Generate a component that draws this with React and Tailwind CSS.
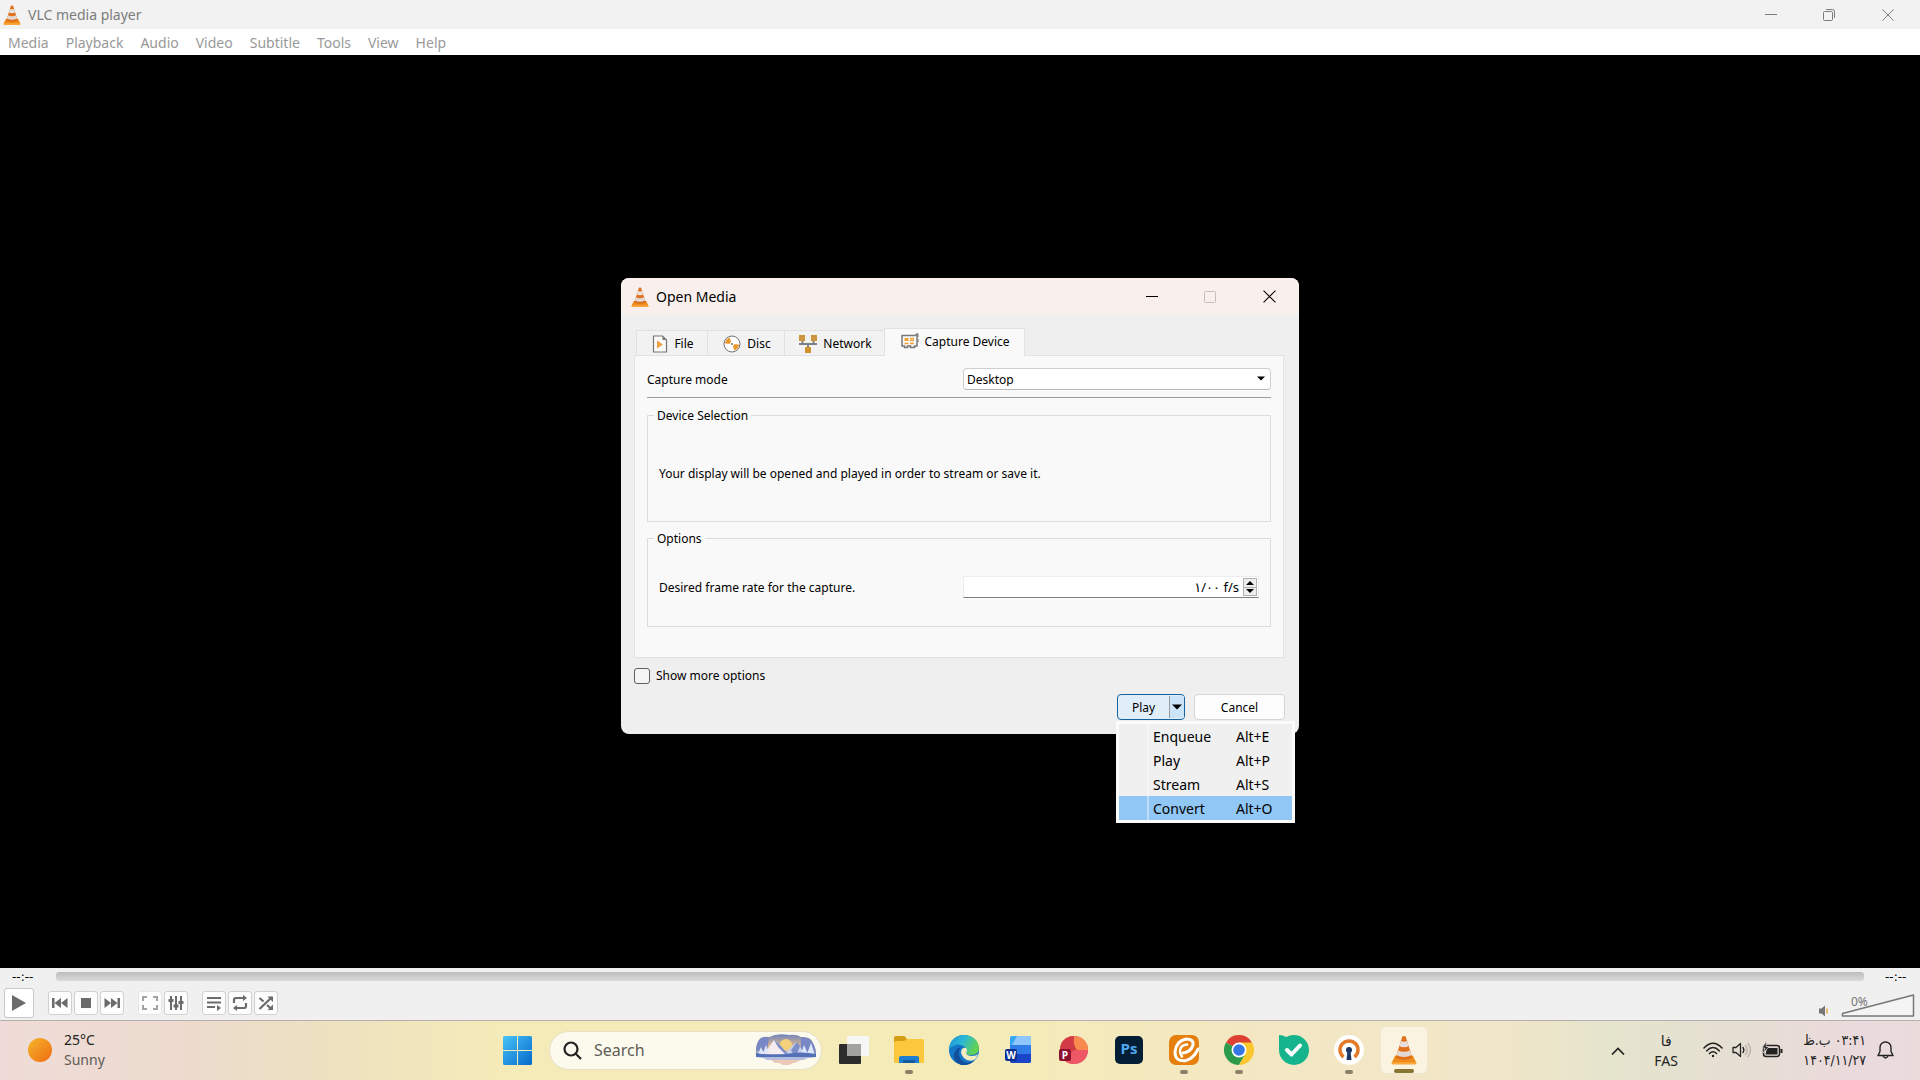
import React, { useState } from "react";

const menus = ["Media", "Playback", "Audio", "Video", "Subtitle", "Tools", "View", "Help"];

const actions = [
  { name: "Enqueue", keys: "Alt+E" },
  { name: "Play", keys: "Alt+P" },
  { name: "Stream", keys: "Alt+S" },
  { name: "Convert", keys: "Alt+O" },
];

function Cone({ className }) {
  return (
    <svg viewBox="0 0 32 36" className={className} aria-hidden="true">
      <path d="M5 25h22l4 8.500q.5 2-1.500 2H2.500q-2 0-1.500-2z" fill="#f08a1c" />
      <path d="M1 33h30l.3 1.500q0 1-1.500 1H2.200q-1.500 0-1.500-1z" fill="#f9a93a" />
      <path d="M6 27q10 5.500 20 0l-1-3H7z" fill="#b3541a" />
      <path d="M14 1.500q2-1.200 4 0L26 27q-10 5-20 0z" fill="#e0701b" />
      <path d="M12.300 7q3.700 1.600 7.400 0l2 6.500q-5.700 2.500-11.400 0z" fill="#e6dfdb" />
      <path d="M8.700 18.500q7.300 3.400 14.600 0l2 6q-9.300 4.200-18.600 0z" fill="#e3d8d2" />
    </svg>
  );
}

function Minimize() {
  return (
    <svg width="12" height="12" viewBox="0 0 12 12" stroke="currentColor" fill="none">
      <path d="M0 5.500h12" />
    </svg>
  );
}

function Close({ size }) {
  return (
    <svg width={size} height={size} viewBox="0 0 12 12" stroke="currentColor" fill="none">
      <path d="M.5.5l11 11M11.500.5l-11 11" />
    </svg>
  );
}

function TitleBar() {
  return (
    <header className="flex h-[29px] items-center justify-between bg-[#f2f2f2] text-[#7c7c7c]">
      <div className="flex items-center gap-[7px] pl-[3px]">
        <Cone className="h-5 w-[18px]" />
        <h1 className="font-['Noto_Sans',sans-serif] text-[14px]">VLC media player</h1>
      </div>
      <div className="flex pr-[2px]">
        <button aria-label="Minimize" className="flex h-7 w-[58px] items-center justify-center"><Minimize /></button>
        <button aria-label="Restore" className="flex h-7 w-[58px] items-center justify-center">
          <svg width="12" height="12" viewBox="0 0 12 12" stroke="currentColor" fill="none">
            <rect x=".5" y="2.500" width="9" height="9" rx="1" />
            <path d="M3 .5h6.500q2 0 2 2V9" />
          </svg>
        </button>
        <button aria-label="Close" className="flex h-7 w-[60px] items-center justify-center"><Close size={12} /></button>
      </div>
    </header>
  );
}

function MenuBar() {
  return (
    <nav className="flex h-[26px] items-center gap-px bg-white font-['Noto_Sans',sans-serif] text-[14px] text-[#999999]">
      {menus.map((m) => (
        <button key={m} className="px-2">{m}</button>
      ))}
    </nav>
  );
}

function FileIcon() {
  return (
    <svg width="16" height="18" viewBox="0 0 16 18">
      <path d="M1.500 1h9l4 4v12h-13z" fill="#fafafa" stroke="#777" strokeWidth="1.200" />
      <path d="M10.500 1v4h4z" fill="#777" />
      <path d="M5 5.500v8l6-4z" fill="#f0a040" />
    </svg>
  );
}

function DiscIcon() {
  return (
    <svg width="18" height="18" viewBox="0 0 18 18">
      <circle cx="9" cy="9" r="8" fill="#fff" stroke="#777" />
      <path d="M9 9L2 8.500Q2.500 4 6.500 2.500z" fill="#e8982f" />
      <path d="M9 9l7 .5Q15.500 14 11.500 15.500z" fill="#e8982f" />
      <circle cx="9" cy="9" r="2.200" fill="#fff" />
      <circle cx="9" cy="9" r="1" fill="#777" />
    </svg>
  );
}

function NetworkIcon() {
  return (
    <svg width="18" height="18" viewBox="0 0 18 18">
      <path d="M3.500 6v3h11V6M9 9v4" fill="none" stroke="#808080" strokeWidth="2" />
      <path d="M0 9h18" stroke="#808080" strokeWidth="2" />
      <rect x="0" y="0" width="6" height="6" fill="#cf9440" />
      <rect x="12" y="0" width="6" height="6" fill="#cf9440" />
      <rect x="6" y="12" width="6" height="6" fill="#cf9430" />
    </svg>
  );
}

function CaptureIcon() {
  return (
    <svg width="18" height="18" viewBox="0 0 18 18">
      <path d="M1 2.500h13l2-1.500v12h-2.500v1.500h-4V13h-3v1.500h-3V13H1z" fill="#fafafa" stroke="#777" strokeWidth="1.500" />
      <path d="M17 1v3M17 6v3" stroke="#777" strokeWidth="1" />
      <rect x="3.500" y="5" width="4" height="3" fill="#f0a030" />
      <path d="M9 5.500h4M9 7.500h4M3.500 10.500h4M9 10.500h4" stroke="#f0a030" strokeWidth="1.300" />
    </svg>
  );
}

const tabs = [
  { name: "File", icon: FileIcon, width: "w-[71px]" },
  { name: "Disc", icon: DiscIcon, width: "w-[77px]" },
  { name: "Network", icon: NetworkIcon, width: "w-[100px]" },
  { name: "Capture Device", icon: CaptureIcon, width: "w-[141px]" },
];

function Tabs() {
  const [active, setActive] = useState("Capture Device");
  return (
    <div role="tablist" className="relative z-10 -mb-px ml-[2px] flex items-end">
      {tabs.map(({ name, icon: Icon, width }) => (
        <button
          key={name}
          role="tab"
          aria-selected={active === name}
          onClick={() => setActive(name)}
          className={
            active === name
              ? `${width} flex h-7 items-center justify-center gap-[5px] border border-b-0 border-[#e2e2e2] bg-[#f9f9f9] pb-px pl-[2px]`
              : `${width} flex h-[26px] items-center justify-center gap-[6px] border border-r-0 border-[#e0e0e0] bg-[#f2f2f2] pt-px pl-[2px]`
          }
        >
          <Icon />
          {name}
        </button>
      ))}
    </div>
  );
}

function CapturePanel() {
  return (
    <div role="tabpanel" className="border border-[#e2e2e2] bg-[#f9f9f9] px-3 pt-3 pb-[30px]">
      <div className="flex h-[22px] items-center">
        <label htmlFor="mode" className="flex-1 pt-px">Capture mode</label>
        <div className="relative w-[308px]">
          <select id="mode" className="h-[22px] w-full appearance-none rounded border border-[#cfcfcf] border-b-[#b8b8b8] bg-white pt-px pl-[3px] leading-none">
            <option>Desktop</option>
          </select>
          <svg width="8" height="5" viewBox="0 0 8 5" className="pointer-events-none absolute top-2 right-[6px]">
            <path d="M0 .5h8L4 4.500z" fill="#000" />
          </svg>
        </div>
      </div>
      <hr className="mt-[7px] border-[#9b9b9b]" />

      <section className="mt-[17px] h-[107px] border border-[#dcdcdc] px-[11px]">
        <h3 className="-mt-2 -ml-[5px] w-fit bg-[#f9f9f9] px-[3px] leading-4">Device Selection</h3>
        <p className="mt-[42px] leading-4">Your display will be opened and played in order to stream or save it.</p>
      </section>

      <section className="mt-4 h-[89px] border border-[#dcdcdc] px-[11px]">
        <h3 className="-mt-2 -ml-[5px] w-fit bg-[#f9f9f9] px-[3px] leading-4">Options</h3>
        <div className="mt-[29px] flex h-[22px] items-center">
          <label htmlFor="fps" className="flex-1 pt-px">Desired frame rate for the capture.</label>
          <div className="flex h-[22px] w-[296px] items-center border border-[#ececec] border-b-[#808080] bg-white pr-px">
            <input
              id="fps"
              defaultValue="۱/۰۰ f/s"
              className="min-w-0 flex-1 bg-transparent pt-px pr-1 text-right font-['Noto_Sans','DejaVu_Sans',sans-serif] text-[13px] outline-none"
            />
            <div className="flex h-[18px] w-[14px] flex-col border border-[#b0b0b0] bg-[#eeeeee]">
              <button aria-label="Increase" className="flex flex-1 items-center justify-center border-b border-[#b0b0b0]">
                <svg width="8" height="4" viewBox="0 0 8 4"><path d="M0 4h8L4 0z" /></svg>
              </button>
              <button aria-label="Decrease" className="flex flex-1 items-center justify-center">
                <svg width="8" height="4" viewBox="0 0 8 4"><path d="M0 0h8L4 4z" /></svg>
              </button>
            </div>
          </div>
        </div>
      </section>
    </div>
  );
}

function ActionMenu() {
  return (
    <div role="menu" className="absolute top-[26px] left-0 -ml-[2px] w-[179px] border-[3px] border-[#fbfbfb] bg-[#f0f0f0] font-['Noto_Sans',sans-serif] text-[14px]">
      {actions.map((a) => (
        <button
          key={a.name}
          role="menuitem"
          className={`grid h-6 w-full grid-cols-[30px_87px_1fr] items-center text-left ${a.name === "Convert" ? "bg-[#91c7f5]" : ""}`}
        >
          <span className="h-6 border-r-2 border-white/40" />
          <span className="pl-1">{a.name}</span>
          <span>{a.keys}</span>
        </button>
      ))}
    </div>
  );
}

function OpenMedia() {
  const [more, setMore] = useState(false);
  return (
    <section aria-label="Open Media" className="h-fit w-[678px] rounded-lg bg-[#efefef] font-['Noto_Sans','DejaVu_Sans',sans-serif] text-[12px] text-black">
      <div className="flex h-[37px] items-center justify-between rounded-t-lg bg-[#f9f0ee] pl-[10px]">
        <div className="flex items-center gap-[7px]">
          <Cone className="h-5 w-[18px]" />
          <h2 className="text-[14px]">Open Media</h2>
        </div>
        <div className="flex">
          <button aria-label="Minimize" className="flex h-9 w-[58px] items-center justify-center"><Minimize /></button>
          <button aria-label="Maximize" disabled className="flex h-9 w-[58px] items-center justify-center text-[#c4bdba]">
            <svg width="12" height="12" viewBox="0 0 12 12" stroke="currentColor" fill="none">
              <rect x=".5" y=".5" width="11" height="11" rx="1" />
            </svg>
          </button>
          <button aria-label="Close" className="flex h-9 w-[60px] items-center justify-center"><Close size={13} /></button>
        </div>
      </div>

      <div className="pt-[13px] pr-[15px] pb-[14px] pl-[13px]">
        <Tabs />
        <CapturePanel />
        <label className="mt-[10px] flex h-4 w-fit items-center gap-[6px]">
          <input
            type="checkbox"
            checked={more}
            onChange={() => setMore(!more)}
            className="h-4 w-4 appearance-none rounded-[3px] border border-[#5f5f5f] bg-[#f5f5f5] checked:bg-[#0067c0]"
          />
          Show more options
        </label>
        <div className="mt-[10px] -mr-px flex justify-end gap-[9px]">
          <div className="relative flex h-[26px] w-[68px] rounded border border-[#15629f] bg-[#e0eef9]">
            <button className="flex-1 pt-px">Play</button>
            <button aria-label="More actions" aria-haspopup="menu" className="my-px flex w-[15px] items-center justify-center border-l border-[#9a9a9a] bg-[#cce4f7]">
              <svg width="10" height="6" viewBox="0 0 10 6"><path d="M0 .5h10L5 5.500z" /></svg>
            </button>
            <ActionMenu />
          </div>
          <button className="h-[26px] w-[91px] rounded border border-[#d5d5d5] bg-[#fdfdfd] pt-px">Cancel</button>
        </div>
      </div>
    </section>
  );
}

function ControlButton({ label, className = "", children }) {
  return (
    <button aria-label={label} className={`flex h-6 w-6 items-center justify-center rounded-[3px] border border-[#d0d0d0] bg-[#fdfdfd] ${className}`}>
      <svg width="16" height="16" viewBox="0 0 16 16" fill="#6b6b6b">{children}</svg>
    </button>
  );
}

function Controls() {
  return (
    <footer className="border-b border-[#b5b0ae] bg-[#f0f0f0] font-['DejaVu_Sans',sans-serif] text-[12px]">
      <div className="flex h-[18px] items-center">
        <span className="w-14 pl-3">--:--</span>
        <input
          type="range"
          aria-label="Seek"
          disabled
          className="mb-px h-[9px] flex-1 appearance-none rounded-[3px] bg-linear-to-b from-[#bebebe] to-[#dadada] [&::-webkit-slider-thumb]:w-0 [&::-webkit-slider-thumb]:appearance-none"
        />
        <span className="w-14 pl-[21px]">--:--</span>
      </div>
      <div className="flex h-[34px] items-center pr-[5px] pl-1">
        <button aria-label="Play" className="flex h-[30px] w-[30px] items-center justify-center rounded-[3px] border border-[#c8c8c8] bg-white">
          <svg width="16" height="18" viewBox="0 0 16 18"><path d="M1 1v16l14-8z" fill="#6b6b6b" /></svg>
        </button>
        <div className="ml-[14px] flex gap-[2px]">
          <ControlButton label="Previous">
            <path d="M0 3h2.500v10H0zM9 3v10L2.500 8zM15.500 3v10L9 8z" />
          </ControlButton>
          <ControlButton label="Stop"><path d="M3 3h10v10H3z" /></ControlButton>
          <ControlButton label="Next">
            <path d="M13.500 3H16v10h-2.500zM.5 3v10L7 8zM7 3v10l6.500-5z" />
          </ControlButton>
        </div>
        <div className="ml-[14px] flex gap-[2px]">
          <ControlButton label="Fullscreen" className="border-[#e6e6e6]">
            <path d="M1 6V2h4M11 2h4v4M15 10v4h-4M5 14H1v-4" fill="none" stroke="#a3a3a3" strokeWidth="2" />
          </ControlButton>
          <ControlButton label="Extended settings">
            <path d="M3 1v14M8 1v14M13 1v14" stroke="#6b6b6b" strokeWidth="2" />
            <path d="M.5 4h5v3h-5zM5.500 9.500h5v3h-5zM10.500 6h5v3h-5z" />
          </ControlButton>
        </div>
        <div className="ml-[14px] flex gap-[2px]">
          <ControlButton label="Playlist">
            <path d="M1 3h14M1 7.500h14M1 12h8" stroke="#6b6b6b" strokeWidth="2.200" />
            <path d="M11 10v6l4-3z" />
          </ControlButton>
          <ControlButton label="Loop">
            <path d="M2 8V5q0-2 2-2h8M14 8v3q0 2-2 2H4" fill="none" stroke="#6b6b6b" strokeWidth="2.200" />
            <path d="M11 0v6l4-3zM5 10v6l-4-3z" />
          </ControlButton>
          <ControlButton label="Random">
            <path d="M1.500 14L13 3M1.500 3l4 3.500M9 10l4 3.500" fill="none" stroke="#6b6b6b" strokeWidth="2.200" />
            <path d="M9.500 1.500H15V7zM15 9.500V15H9.500z" />
          </ControlButton>
        </div>
        <div className="mt-1 ml-auto flex items-end gap-3">
          <button aria-label="Mute">
            <svg width="10" height="12" viewBox="0 0 10 12">
              <path d="M0 3.500h2.500L6 .5v11L2.500 8.500H0z" fill="#757575" />
              <path d="M8 3.500v5" stroke="#e9a94d" strokeWidth="1.500" />
            </svg>
          </button>
          <div className="relative h-[23px] w-[74px]">
            <svg width="74" height="23" viewBox="0 0 74 23" className="absolute inset-0">
              <path d="M1.500 19.500L72.500 1v21h-71z" fill="#f4f4f4" stroke="#777" strokeWidth="1.500" strokeLinejoin="round" />
            </svg>
            <span className="absolute top-0 left-[10px] font-['Noto_Sans',sans-serif] text-[12px] leading-4 text-[#777777]">0%</span>
            <input type="range" aria-label="Volume" defaultValue="0" className="absolute inset-0 m-0 h-full w-full opacity-0" />
          </div>
        </div>
      </div>
    </footer>
  );
}

function SearchArt() {
  return (
    <svg width="62" height="32" viewBox="0 0 62 32" aria-hidden="true">
      <defs>
        <linearGradient id="sky" x1="0" y1="0" x2="0" y2="1">
          <stop offset="0" stopColor="#7183bd" />
          <stop offset=".55" stopColor="#d9b88f" />
          <stop offset="1" stopColor="#8fa5d6" />
        </linearGradient>
      </defs>
      <path d="M4 6Q6 2 14 3q8-4 20-2 8-1 12 2 10-1 12 6 3 6 3 12H1q-1-8 3-15z" fill="url(#sky)" />
      <path d="M4 6q3-4 10-2l-2 13H1q0-7 3-11zM46 4q9-1 12 5 3 5 3 12H45z" fill="#7788c4" />
      <circle cx="31" cy="11" r="6" fill="#f6d17c" />
      <path d="M9 20L19 6q4 3 6 7l7 7z" fill="#f4ecef" />
      <path d="M30 20q6-8 12-12l8 12z" fill="#c9cfe8" />
      <path d="M19 6l4 7 7 7h3L25 11zM42 8l-6 8 2 4h4l3-8z" fill="#7c8fc9" />
      <path d="M3 20l3-7 3 7zM8 19l3-8 3 8zM46 20l3-9 4 9zM52 20l4-11 4 12z" fill="#dfe6f8" />
      <path d="M1 19q15 3 30 1 15-3 30 0v3q-30 3-60 0z" fill="#5271b6" />
      <path d="M6 23h50l-8 3H12z" fill="#b4bddd" />
      <path d="M16 26h30l-6 3H20zM24 29h14l-4 2h-6z" fill="#ecc9b4" />
    </svg>
  );
}

function TaskView() {
  return (
    <svg width="30" height="28" viewBox="0 0 30 28">
      <rect x="8" y="0" width="22" height="20" rx="1" fill="#f6f6f4" />
      <rect x="0" y="8" width="22" height="20" rx="1" fill="#2c2c2c" />
      <path d="M8 8h14v12H8z" fill="#a3a3a1" />
    </svg>
  );
}

function Explorer() {
  return (
    <svg width="30" height="28" viewBox="0 0 30 28">
      <path d="M0 2q0-2 2-2h8q1 0 3 3v5H0z" fill="#d59c16" />
      <path d="M0 7q0-2 2-2h8l3-2h15q2 0 2 2v21q0 1-1 1H1q-1 0-1-1z" fill="#fbc73d" />
      <path d="M5 27v-5q0-2 2-2h16q2 0 2 2v5z" fill="#1e7fd0" />
      <path d="M9 27v-2q0-1 1-1h10q1 0 1 1v2z" fill="#13599c" />
    </svg>
  );
}

function Edge() {
  return (
    <svg width="30" height="30" viewBox="0 0 30 30">
      <defs>
        <linearGradient id="edgeTop" x1="0" y1="0" x2="1" y2=".4">
          <stop offset="0" stopColor="#1b8fd6" />
          <stop offset=".5" stopColor="#2bb9d6" />
          <stop offset="1" stopColor="#63d151" />
        </linearGradient>
      </defs>
      <circle cx="15" cy="15" r="15" fill="#1476c9" />
      <path d="M0 14Q1 1 15 0q14 1 15 13 0 7-8 7-6 0-5-3 2-2-1-5Q9 6 0 14z" fill="url(#edgeTop)" />
      <path d="M12 12q-4 5-1 11 4 7 14 3-5 5-13 4-8-3-7-11 2-6 7-7z" fill="#114f9b" />
      <path d="M12 17q1-5 5-4 2 2 0 5 1 3 6 3 4 0 6-2-1 4-4 6-6 2-10-2-3-3-3-6z" fill="#f5ebc0" />
    </svg>
  );
}

function Word() {
  return (
    <svg width="28" height="30" viewBox="0 0 28 30" className="font-['Open_Sans',sans-serif]">
      <rect x="5" y="1" width="21" height="27" rx="2" fill="#36a6f2" />
      <path d="M12 1h12q2 0 2 2v7H7z" fill="#8fc6fb" />
      <path d="M5 10h21v10H5z" fill="#2f7be8" />
      <path d="M5 19h21v7q0 2-2 2H7q-2 0-2-2z" fill="#1945c6" />
      <rect x="0" y="14" width="12" height="12" rx="2" fill="#0f2f8f" />
      <text x="6" y="24" textAnchor="middle" fontSize="10" fontWeight="700" fill="#fff">W</text>
    </svg>
  );
}

function PowerPoint() {
  return (
    <svg width="30" height="30" viewBox="0 0 30 30" className="font-['Open_Sans',sans-serif]">
      <circle cx="15" cy="15" r="14" fill="#e94b4b" />
      <path d="M15 1q13 1 14 14l-9 5q-6-5-5-19z" fill="#f98a4f" />
      <path d="M15 15l14 0q-1 13-14 14-6 0-9-3z" fill="#ee5866" />
      <path d="M2 9q4-8 13-8-2 8 3 14L1 17q0-4 1-8z" fill="#d23a45" />
      <rect x="0" y="14" width="12" height="12" rx="2" fill="#8e1230" />
      <text x="6" y="24" textAnchor="middle" fontSize="10" fontWeight="700" fill="#fff">P</text>
    </svg>
  );
}

function Photoshop() {
  return (
    <svg width="28" height="28" viewBox="0 0 28 28" className="font-['Open_Sans',sans-serif]">
      <rect width="28" height="28" rx="5" fill="#041e36" />
      <text x="14" y="18" textAnchor="middle" fontSize="15" fontWeight="700" fill="#4da8f0">Ps</text>
    </svg>
  );
}

function Eitaa() {
  return (
    <svg width="30" height="30" viewBox="0 0 30 30">
      <rect width="30" height="30" rx="7" fill="#e5800e" />
      <path d="M29 14q-4 9-12 11.500Q6 27 6 17 7 6 17 4q8 0 7 6-2 7-10 8" fill="none" stroke="#fff" strokeWidth="3" strokeLinecap="round" />
      <path d="M18 9.500q-6.500.5-7 6 0 4 2 6" fill="none" stroke="#fff" strokeWidth="2.500" strokeLinecap="round" />
    </svg>
  );
}

function Chrome() {
  return (
    <svg width="30" height="30" viewBox="0 0 30 30">
      <path d="M15 15L2 7.500A15 15 0 0 1 28 7.500z" fill="#de4032" />
      <path d="M2 7.500A15 15 0 0 0 15 30l6.500-11.300L15 15z" fill="#2c9c4b" />
      <path d="M15 30A15 15 0 0 0 28 7.500H15l6.500 11.200z" fill="#fbc72f" />
      <circle cx="15" cy="15" r="7.500" fill="#fff" />
      <circle cx="15" cy="15" r="5.800" fill="#3577e5" />
    </svg>
  );
}

function Shield() {
  return (
    <svg width="30" height="30" viewBox="0 0 30 30">
      <path d="M0 0q4 0 7 2 4-2 8-2a15 15 0 1 1-15 15z" fill="#16b48c" />
      <path d="M8 15l4.500 4.500 8.500-9" fill="none" stroke="#fff" strokeWidth="4" strokeLinecap="round" strokeLinejoin="round" />
    </svg>
  );
}

function OpenVpn() {
  return (
    <svg width="30" height="30" viewBox="0 0 30 30">
      <circle cx="15" cy="15" r="15" fill="#fff" />
      <path d="M9.500 22a9 9 0 1 1 11 0" fill="none" stroke="#e37a2a" strokeWidth="3.500" />
      <circle cx="15" cy="15" r="3" fill="#1c3766" />
      <path d="M13.500 16h3l1 9h-5z" fill="#1c3766" />
    </svg>
  );
}

const apps = [
  { name: "Task View", icon: TaskView },
  { name: "File Explorer", icon: Explorer, running: true },
  { name: "Microsoft Edge", icon: Edge },
  { name: "Word", icon: Word },
  { name: "PowerPoint", icon: PowerPoint },
  { name: "Photoshop", icon: Photoshop },
  { name: "Eitaa", icon: Eitaa, running: true },
  { name: "Chrome", icon: Chrome, running: true },
  { name: "Security", icon: Shield },
  { name: "OpenVPN", icon: OpenVpn, running: true },
];

function Tray() {
  return (
    <div className="flex items-center justify-end pr-[26px]">
      <button aria-label="Show hidden icons" className="mr-[27px]">
        <svg width="14" height="8" viewBox="0 0 14 8" fill="none" stroke="#222" strokeWidth="1.700">
          <path d="M1 7.500l6-6 6 6" />
        </svg>
      </button>
      <button className="mr-[23px] flex w-7 flex-col items-center leading-5">
        <span lang="fa" className="font-['DejaVu_Sans',sans-serif] text-[14px]">فا</span>
        <span>FAS</span>
      </button>
      <button aria-label="Network, volume and battery" className="mr-5 flex items-center gap-[9px] pb-[2px]">
        <svg width="20" height="16" viewBox="0 0 20 16" fill="none" stroke="#222" strokeWidth="1.600" strokeLinecap="round">
          <path d="M1 6q9-9.500 18 0M3.800 8.800q6.200-6.500 12.400 0M6.500 11.500q3.500-3.500 7 0" />
          <circle cx="10" cy="14" r="1.200" fill="#222" stroke="none" />
        </svg>
        <svg width="21" height="16" viewBox="0 0 21 16" fill="none" stroke="#222" strokeWidth="1.300" strokeLinejoin="round" strokeLinecap="round">
          <path d="M1 5.500h3L8.500 1.500v13L4 10.500H1z" />
          <path d="M11 5.500q1.800 2.500 0 5" />
          <path d="M13.500 3.500q3.500 4.500 0 9M16 1.500q5 6.500 0 13" stroke="#b3b0aa" />
        </svg>
        <svg width="21" height="18" viewBox="0 0 21 18">
          <rect x="1.500" y="4.500" width="16" height="11" rx="2.500" fill="none" stroke="#222" strokeWidth="1.500" />
          <path d="M5 7h10.500v6.500h-12z" fill="#222" />
          <path d="M18.500 8h2v4h-2z" fill="#222" />
          <path d="M4.500 0L0 7h3l-1.500 5L7 5.500H4z" fill="#222" stroke="#e8dfd8" strokeWidth=".7" />
        </svg>
      </button>
      <button className="flex flex-col items-end pb-[2px] font-['DejaVu_Sans_Condensed','DejaVu_Sans',sans-serif] text-[14px] leading-5">
        <span lang="fa" dir="rtl">۰۳:۴۱ ب.ظ</span>
        <span lang="fa">۱۴۰۴/۱۱/۲۷</span>
      </button>
      <button aria-label="Notifications" className="ml-[11px] pb-[2px]">
        <svg width="17" height="18" viewBox="0 0 17 18" fill="none" stroke="#222" strokeWidth="1.400" strokeLinejoin="round">
          <path d="M1 14.500L3 10.500V6.500a5.500 5.500 0 0 1 11 0v4l2 4z" />
          <path d="M6 15q2.500 4 5 0" />
        </svg>
      </button>
    </div>
  );
}

function Taskbar() {
  return (
    <div className="grid h-[59px] grid-cols-[1fr_auto_1fr] bg-[linear-gradient(90deg,#efdcd8_0%,#ecdbcd_10%,#eee2bf_18%,#f5ebb9_26%,#f5ebb9_54%,#f3e7c4_66%,#f1e6c8_78%,#e5e4cd_84%,#e5dfd2_90%,#ebdadd_97%,#e9dcdb_100%)] font-['Noto_Sans',sans-serif] text-[14px] text-[#222222]">
      <button className="flex w-fit items-center gap-3 pb-[2px] pl-7 text-left">
        <span className="h-6 w-6 rounded-full bg-linear-to-br from-[#f4b62d] to-[#ee680f]" />
        <span className="flex flex-col leading-5">
          <span>25°C</span>
          <span className="text-[#605a58]">Sunny</span>
        </span>
      </button>
      <div className="flex items-center pb-px">
        <button aria-label="Start" className="flex w-14 justify-center">
          <svg width="29" height="29" viewBox="0 0 29 29">
            <defs>
              <linearGradient id="win" x1="0" y1="0" x2="1" y2="1">
                <stop offset="0" stopColor="#48c4f7" />
                <stop offset="1" stopColor="#0568cc" />
              </linearGradient>
            </defs>
            <path d="M1.500 0H14v14H0V1.500Q0 0 1.500 0zM15 0h12.500Q29 0 29 1.500V14H15zM0 15h14v14H1.500Q0 29 0 27.500zM15 15h14v12.500q0 1.500-1.500 1.500H15z" fill="url(#win)" />
          </svg>
        </button>
        <label className="mx-1 flex h-[39px] w-[273px] items-center rounded-full border border-[#e6dfc4] bg-[#fcfaec] pr-1 pl-[13px]">
          <svg width="19" height="19" viewBox="0 0 19 19" fill="none" stroke="#222" strokeWidth="2.200">
            <circle cx="8" cy="8" r="6.500" />
            <path d="M12.500 12.500l5.500 5.500" />
          </svg>
          <input type="text" aria-label="Search" placeholder="Search" className="ml-3 min-w-0 flex-1 bg-transparent text-[16px] outline-none placeholder:text-[#5f5d57]" />
          <SearchArt />
        </label>
        {apps.map(({ name, icon: Icon, running }) => (
          <button key={name} aria-label={name} className="relative flex h-12 w-[55px] items-center justify-center">
            <Icon />
            {running && <span className="absolute bottom-0 h-1 w-2 rounded-full bg-[#8a8168]" />}
          </button>
        ))}
        <button aria-label="VLC media player" className="relative mr-[3px] ml-1 flex h-12 w-12 items-center justify-center rounded-md border border-[#efe6cf] bg-[#f9f3e0]">
          <Cone className="h-[30px] w-[26px]" />
          <span className="absolute bottom-0 h-1 w-5 rounded-full bg-[#86742f]" />
        </button>
      </div>
      <Tray />
    </div>
  );
}

function App() {
  return (
    <div className="flex h-screen flex-col overflow-hidden bg-black">
      <TitleBar />
      <MenuBar />
      <main className="flex min-h-0 flex-1 justify-center bg-black pt-[223px]">
        <OpenMedia />
      </main>
      <Controls />
      <Taskbar />
    </div>
  );
}

export default App;
